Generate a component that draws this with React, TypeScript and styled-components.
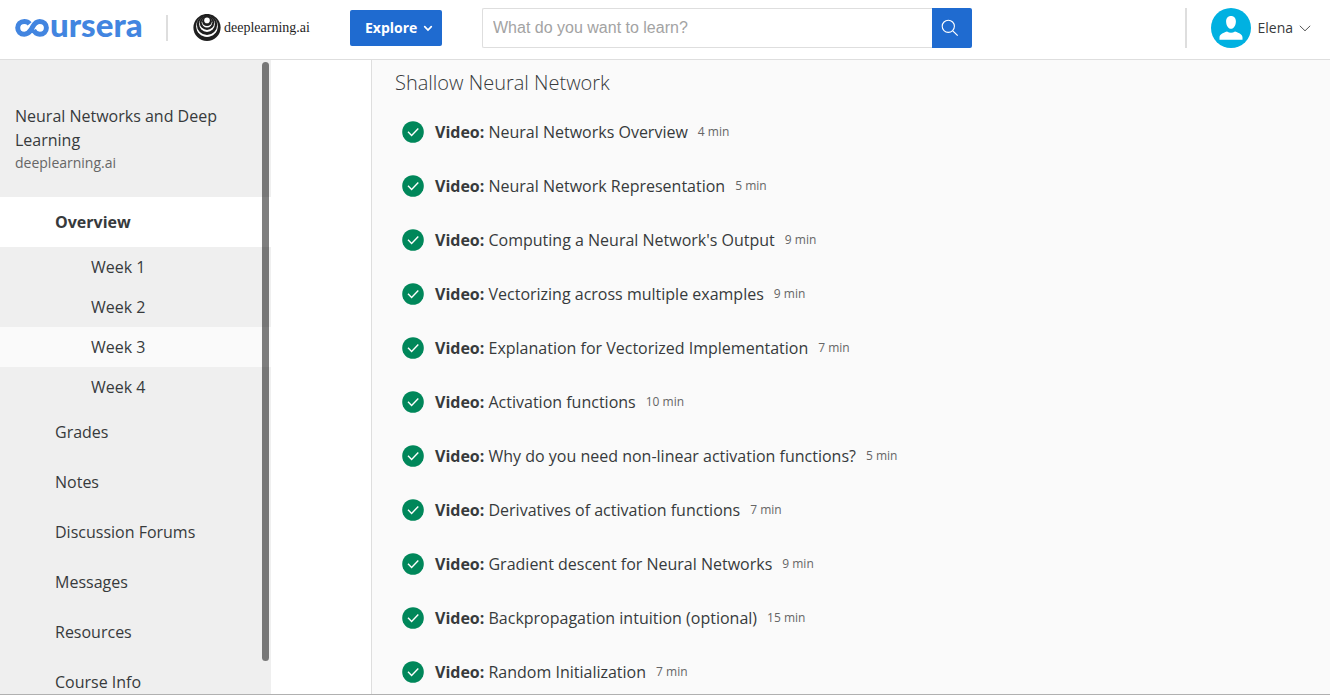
import React from "react";
import styled, { createGlobalStyle, css } from "styled-components";

const GlobalStyle = createGlobalStyle`
  *, *::before, *::after { box-sizing: border-box; }
  body {
    margin: 0;
    background: #fff;
    color: #373a3c;
    font-family: "Open Sans", "Noto Sans", sans-serif;
    font-size: 16px;
    line-height: 24px;
  }
  h1, h2, p, ul { margin: 0; padding: 0; }
  ul { list-style: none; }
  a { color: inherit; text-decoration: none; }
`;

const Shell = styled.div`
  display: flex;
  flex-direction: column;
  height: 100vh;
  padding-bottom: 1px;
`;

const Header = styled.header`
  display: flex;
  flex: none;
  align-items: center;
  height: 60px;
  padding: 0 19px 4px 15px;
  border-bottom: 1px solid #dedede;
`;

const BrandLink = styled.a`
  display: flex;
  align-items: center;
  svg { display: block; flex: none; }
`;

const LogoLink = styled(BrandLink)`
  width: 127px;
`;

const Divider = styled.span<{ $tall?: boolean }>`
  flex: none;
  width: 2px;
  height: ${(p) => (p.$tall ? 40 : 26)}px;
  background: #dedede;
`;

const PartnerName = styled.span`
  margin-left: 2px;
  color: #1f1f1f;
  font-family: "Liberation Serif", "Times New Roman", serif;
  font-size: 14px;
`;

const Brands = styled.div`
  display: flex;
  flex: none;
  align-items: center;
  gap: 24px;
  width: 335px;
`;

const ExploreButton = styled.button`
  display: flex;
  flex: none;
  align-items: center;
  justify-content: space-between;
  width: 92px;
  height: 36px;
  padding: 0 9px 0 15px;
  border: 0;
  border-radius: 2px;
  background: #1f6bd0;
  color: #fff;
  font: 700 14px/20px "Open Sans", sans-serif;
`;

const SearchForm = styled.form`
  display: flex;
  flex: 0 1 490px;
  height: 40px;
  margin: 0 auto 0 40px;
`;

const SearchInput = styled.input`
  flex: 1;
  min-width: 0;
  padding: 0 10px;
  border: 1px solid #dedede;
  border-right: 0;
  border-radius: 2px 0 0 2px;
  background: #fff;
  color: #373a3c;
  font: 16px/20px "Liberation Sans", Arial, sans-serif;
  &::placeholder { color: #a3a3a3; opacity: 1; }
`;

const SearchButton = styled.button`
  display: grid;
  place-items: center;
  flex: none;
  width: 40px;
  padding: 0 4px 0 0;
  border: 0;
  border-radius: 0 2px 2px 0;
  background: #1f6bd0;
`;

const AccountButton = styled.button`
  display: flex;
  flex: none;
  align-items: center;
  margin-left: 24px;
  padding: 0;
  border: 0;
  background: none;
  color: #373a3c;
  font: 14px/20px "Open Sans", sans-serif;
`;

const AccountName = styled.span`
  margin: 0 6px;
`;

const Body = styled.div`
  display: flex;
  flex: 1;
  min-height: 0;
  border-bottom: 1px solid #b0b0b0;
`;

const Sidebar = styled.aside`
  position: relative;
  flex: none;
  width: 271px;
  overflow: hidden;
  background: #efefef;
`;

const ScrollThumb = styled.div`
  position: absolute;
  top: 2px;
  right: 2px;
  bottom: 33px;
  width: 7px;
  border-radius: 4px;
  background: rgba(0, 0, 0, 0.5);
`;

const CourseHeading = styled.div`
  padding: 44px 40px 23px 15px;
`;

const CourseTitle = styled.h1`
  font-size: 16px;
  font-weight: 400;
  line-height: 24px;
`;

const CoursePartner = styled.p`
  color: #666;
  font-size: 14px;
  line-height: 22px;
`;

const NavLink = styled.a<{ $active?: boolean }>`
  display: block;
  padding-left: 55px;
  line-height: 50px;
  ${(p) => p.$active && css`
    background: #fff;
    font-weight: 700;
  `}
`;

const WeekLink = styled.a<{ $active?: boolean }>`
  display: block;
  padding-left: 91px;
  background: ${(p) => (p.$active ? "#fafafa" : "transparent")};
  line-height: 40px;
`;

const Main = styled.main`
  flex: 1;
  min-width: 0;
  margin-left: 100px;
  padding: 0 23px;
  border-left: 1px solid #dedede;
  background: #fafafa;
  overflow: hidden;
`;

const SectionTitle = styled.h2`
  padding: 8px 0 7px;
  font-size: 20px;
  font-weight: 300;
  line-height: 30px;
`;

const LessonLink = styled.a`
  display: flex;
  align-items: center;
  height: 54px;
  padding-left: 7px;
`;

const LessonName = styled.span`
  margin: 0 10px 0 11px;
`;

const Duration = styled.span`
  color: #666;
  font-size: 12px;
`;

const CourseraLogo = () => (
  <svg width="130" height="54" viewBox="0 -16 130 54" role="img" aria-label="coursera">
    <path
      d="M14.6 6.8C13.3 5.2 11.5 4.4 9.3 4.4C5.4 4.4 2.7 7.2 2.7 10.8S5.4 17.2 9.3 17.2C12.2 17.2 14 15.9 15.9 12.9L18 9.2C19.8 5.9 21.8 4.4 24.8 4.4C28.6 4.4 31.4 7.2 31.4 10.8S28.6 17.2 24.8 17.2C22 17.2 19.8 15.7 18.6 13"
      fill="none" stroke="#4285e0" strokeWidth="5"
    />
    <text x="35" y="20" fill="#4285e0" fontFamily="Lato, sans-serif" fontSize="33" fontWeight="900">ursera</text>
  </svg>
);

const PartnerMark = () => (
  <svg width="30" height="28" viewBox="0 0 30 28" aria-hidden="true">
    <circle cx="15" cy="13.5" r="13.6" fill="#1f1f1f" />
    <circle cx="15" cy="12.2" r="10.8" fill="#fff" />
    <circle cx="15" cy="10.8" r="10.2" fill="#1f1f1f" />
    <circle cx="15" cy="10" r="7.9" fill="#fff" />
    <circle cx="15" cy="8.7" r="7.2" fill="#1f1f1f" />
    <circle cx="15" cy="8.2" r="5.3" fill="#fff" />
    <circle cx="15" cy="7.2" r="4.9" fill="#1f1f1f" />
    <circle cx="15" cy="6.4" r="2.8" fill="#fff" />
  </svg>
);

const Avatar = () => (
  <svg width="40" height="40" viewBox="0 0 40 40" aria-hidden="true">
    <circle cx="20" cy="20" r="20" fill="#00b1e1" />
    <path
      d="M20 8C23 8 24.9 10.2 24.9 13.4C24.9 17 22.8 20.8 20 20.8S15.1 17 15.1 13.4C15.1 10.2 17 8 20 8ZM8.5 31.8V29.5C8.5 26.5 11.5 25 16 23.5Q20 26 24 23.5C28.5 25 31.5 26.5 31.5 29.5V31.8Z"
      fill="#fff"
    />
  </svg>
);

const CheckMark = () => (
  <svg width="22" height="22" viewBox="0 0 22 22" role="img" aria-label="Completed">
    <circle cx="11" cy="11" r="10.8" fill="#00875a" />
    <path d="M6 10.8L9.6 14.4L16.3 7.4" fill="none" stroke="#fff" strokeWidth="1.4" />
  </svg>
);

const weeks = ["Week 1", "Week 2", "Week 3", "Week 4"];
const pages = ["Grades", "Notes", "Discussion Forums", "Messages", "Resources", "Course Info"];

const lessons = [
  { name: "Neural Networks Overview", minutes: 4 },
  { name: "Neural Network Representation", minutes: 5 },
  { name: "Computing a Neural Network's Output", minutes: 9 },
  { name: "Vectorizing across multiple examples", minutes: 9 },
  { name: "Explanation for Vectorized Implementation", minutes: 7 },
  { name: "Activation functions", minutes: 10 },
  { name: "Why do you need non-linear activation functions?", minutes: 5 },
  { name: "Derivatives of activation functions", minutes: 7 },
  { name: "Gradient descent for Neural Networks", minutes: 9 },
  { name: "Backpropagation intuition (optional)", minutes: 15 },
  { name: "Random Initialization", minutes: 7 },
];

export default function App() {
  return (
    <Shell>
      <GlobalStyle />
      <Header>
        <Brands>
          <LogoLink href="#home"><CourseraLogo /></LogoLink>
          <Divider />
          <BrandLink href="#partner">
            <PartnerMark />
            <PartnerName>deeplearning.ai</PartnerName>
          </BrandLink>
        </Brands>
        <ExploreButton type="button">
          Explore
          <svg width="10" height="8" viewBox="0 0 10 8" aria-hidden="true">
            <path d="M1.7 2.7L5 6L8.3 2.7" fill="none" stroke="#fff" strokeWidth="1.7" strokeLinecap="round" />
          </svg>
        </ExploreButton>
        <SearchForm role="search">
          <SearchInput type="text" aria-label="Search" placeholder="What do you want to learn?" />
          <SearchButton type="submit" aria-label="Submit search">
            <svg width="18" height="18" viewBox="0 0 18 18" aria-hidden="true">
              <circle cx="7.3" cy="7.3" r="6.1" fill="none" stroke="#fff" strokeWidth="1.1" />
              <path d="M11.8 11.8L16.7 16.7" stroke="#fff" strokeWidth="1.2" />
            </svg>
          </SearchButton>
        </SearchForm>
        <Divider $tall />
        <AccountButton type="button">
          <Avatar />
          <AccountName>Elena</AccountName>
          <svg width="12" height="8" viewBox="0 0 12 8" aria-hidden="true">
            <path d="M0.8 1.8L6 6.8L11.2 1.8" fill="none" stroke="#555" strokeWidth="1" />
          </svg>
        </AccountButton>
      </Header>
      <Body>
        <Sidebar>
          <CourseHeading>
            <CourseTitle>Neural Networks and Deep Learning</CourseTitle>
            <CoursePartner>deeplearning.ai</CoursePartner>
          </CourseHeading>
          <nav aria-label="Course">
            <NavLink href="#overview" $active>Overview</NavLink>
            <ul>
              {weeks.map((week) => (
                <li key={week}>
                  <WeekLink href="#week" $active={week === "Week 3"}>{week}</WeekLink>
                </li>
              ))}
            </ul>
            {pages.map((page) => (
              <NavLink key={page} href="#page">{page}</NavLink>
            ))}
          </nav>
          <ScrollThumb />
        </Sidebar>
        <Main>
          <SectionTitle>Shallow Neural Network</SectionTitle>
          <ul>
            {lessons.map((lesson) => (
              <li key={lesson.name}>
                <LessonLink href="#lesson">
                  <CheckMark />
                  <LessonName><b>Video:</b> {lesson.name}</LessonName>
                  <Duration>{lesson.minutes} min</Duration>
                </LessonLink>
              </li>
            ))}
          </ul>
        </Main>
      </Body>
    </Shell>
  );
}
